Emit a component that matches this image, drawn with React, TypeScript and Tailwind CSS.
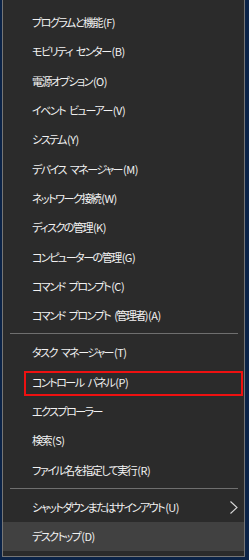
import React from "react";

const sec1 = [
  "プログラムと機能(F)",
  "モビリティ センター(B)",
  "電源オプション(O)",
  "イベント ビューアー(V)",
  "システム(Y)",
  "デバイス マネージャー(M)",
  "ネットワーク接続(W)",
  "ディスクの管理(K)",
  "コンピューターの管理(G)",
  "コマンド プロンプト(C)",
  "コマンド プロンプト (管理者)(A)",
];

const sec2 = [
  "タスク マネージャー(T)",
  "コントロール パネル(P)",
  "エクスプローラー",
  "検索(S)",
  "ファイル名を指定して実行(R)",
];

function Item({ label, boxed, hot, arrow }: { label: string; boxed?: boolean; hot?: boolean; arrow?: boolean }) {
  const m = label.match(/^(.*?)(\([A-Z]\))$/);
  const main = m ? m[1] : label;
  const key = m ? m[2] : "";
  const parts = main.split(" ");
  return (
    <div
      className={
        "relative flex h-[29.3px] items-center pl-[29px] pr-[6px] text-[11px] leading-none text-[#f2f2f2] " +
        (hot ? "bg-[#414141]" : "")
      }
    >
      <span className="flex-1 whitespace-nowrap">
        <span className="tracking-[-1.5px]">
          {parts.map((p, i) => (
            <React.Fragment key={i}>
              {i > 0 && <span className="inline-block w-[4px]"> </span>}
              {p}
            </React.Fragment>
          ))}
        </span>
        {key && <span className="ml-[1px] tracking-[-0.5px]">{key}</span>}
      </span>
      {arrow && (
        <svg width="8" height="13" viewBox="0 0 8 13">
          <polyline points="0.5,0.5 7,6.5 0.5,12.5" fill="none" stroke="#d8d8d8" strokeWidth="1.1" />
        </svg>
      )}
      {boxed && (
        <div className="pointer-events-none absolute left-[21px] right-[1px] top-[3px] bottom-[1px] border-2 border-[#ee1111]" />
      )}
    </div>
  );
}

function Sep() {
  return (
    <div className="h-[8px] pl-[7px] pr-[6px] pt-[3px]">
      <div className="h-px bg-[#6f6f6f]" />
    </div>
  );
}

export default function App() {
  return (
    <div className="h-[560px] w-[249px] overflow-hidden bg-[#0b2347] font-['Noto_Sans_CJK_JP','Noto_Sans',sans-serif] [font-feature-settings:'palt']">
      <div className="ml-[2px] w-[243px] border-x border-b border-[#767676] bg-[#2b2b2b] pt-[8px] pb-[5px]">
        {sec1.map((l) => (
          <Item key={l} label={l} />
        ))}
        <Sep />
        {sec2.map((l) => (
          <Item key={l} label={l} boxed={l.startsWith("コントロール")} />
        ))}
        <Sep />
        <Item label="シャットダウンまたはサインアウト(U)" arrow />
        <Item label="デスクトップ(D)" hot />
      </div>
    </div>
  );
}
